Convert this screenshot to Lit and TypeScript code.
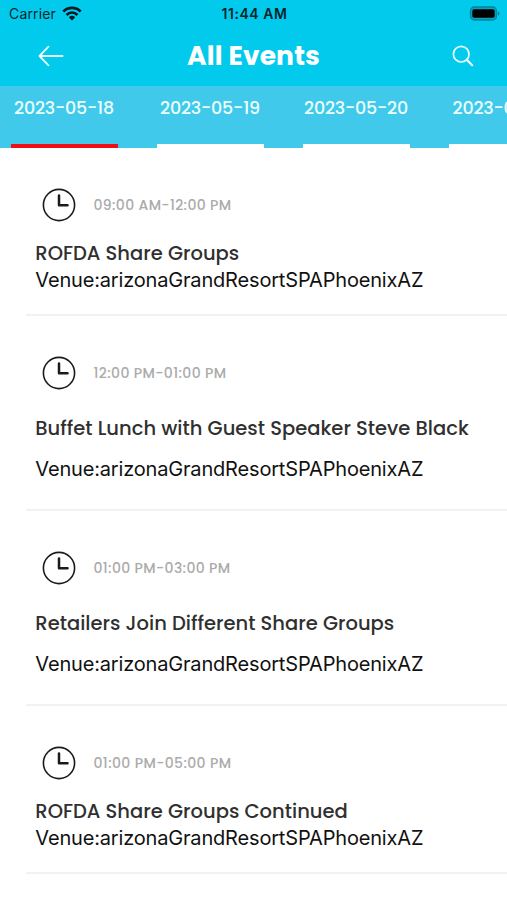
import { LitElement, html, css, svg } from "lit";
import { customElement, property } from "lit/decorators.js";
import { classMap } from "lit/directives/class-map.js";

interface EventItem {
  time: string;
  timeWidth: number;
  title: string;
  titleWidth: number;
  tall: boolean;
}

const VENUE = "Venue:arizonaGrandResortSPAPhoenixAZ";

const EVENTS: EventItem[] = [
  { time: "09:00 AM-12:00 PM", timeWidth: 138, title: "ROFDA Share Groups", titleWidth: 204, tall: false },
  { time: "12:00 PM-01:00 PM", timeWidth: 133, title: "Buffet Lunch with Guest Speaker Steve Black", titleWidth: 433.5, tall: true },
  { time: "01:00 PM-03:00 PM", timeWidth: 137, title: "Retailers Join Different Share Groups", titleWidth: 359, tall: true },
  { time: "01:00 PM-05:00 PM", timeWidth: 138, title: "ROFDA Share Groups Continued", titleWidth: 312.5, tall: false },
];

const DATES = [
  { label: "2023-05-18", width: 100 },
  { label: "2023-05-19", width: 100 },
  { label: "2023-05-20", width: 104 },
  { label: "2023-05-21", width: 99 },
];

/** One line of text whose letter spacing is tuned so that it spans a given width. */
@customElement("fit-text")
class FitText extends LitElement {
  @property() text = "";
  @property({ type: Number }) span = 0;

  static styles = css`
    :host { display: block; white-space: nowrap; }
    .line { display: inline-block; }
  `;

  render() {
    return html`<span class="line">${this.text}</span>`;
  }

  updated() {
    const line = this.renderRoot.querySelector<HTMLElement>(".line")!;
    line.style.letterSpacing = "0px";
    const natural = line.getBoundingClientRect().width;
    line.style.letterSpacing = `${(this.span - natural) / this.text.length}px`;
  }
}

@customElement("event-row")
class EventRow extends LitElement {
  @property({ attribute: false }) item!: EventItem;

  static styles = css`
    :host { display: block; }
    .row { box-sizing: border-box; height: 168px; margin-left: 26px; padding: 40px 0 0 9.3px; border-bottom: 2px solid #f2f2f2; }
    .tall { height: 195px; }
    .when { display: flex; align-items: center; gap: 17px; height: 34px; padding-left: 7.2px; }
    .clock { width: 34px; height: 34px; flex: none; }
    .time { font-size: 14px; font-weight: 500; line-height: 20px; color: #ababab; padding-top: 1px; }
    .title { font-size: 19.5px; font-weight: 500; line-height: 26px; color: #303030; margin-top: 19px; }
    .venue { font-family: Inter, "Liberation Sans", sans-serif; font-size: 20px; line-height: 26px; color: #111; }
    .tall .title { margin-top: 26px; }
    .tall .venue { margin-top: 14px; }
  `;

  render() {
    const { time, timeWidth, title, titleWidth, tall } = this.item;
    return html`
      <div class=${classMap({ row: true, tall })}>
        <div class="when">
          <svg class="clock" viewBox="0 0 34 34" fill="none" stroke="#1a1a1a">
            <circle cx="17" cy="17" r="15.6" stroke-width="1.6" />
            <path d="M17 7.5V17.3H25.5" stroke-width="2.5" stroke-linecap="round" stroke-linejoin="round" />
          </svg>
          <fit-text class="time" .text=${time} .span=${timeWidth}></fit-text>
        </div>
        <fit-text class="title" .text=${title} .span=${titleWidth}></fit-text>
        <fit-text class="venue" .text=${VENUE} .span=${388}></fit-text>
      </div>
    `;
  }
}

@customElement("app-root")
class AppRoot extends LitElement {
  static styles = css`
    :host { display: block; width: 507px; height: 900px; overflow: hidden; background: #fff; font-family: Poppins, Inter, "Liberation Sans", sans-serif; }
    .top { height: 86px; background: #02caec; }
    .status { display: grid; grid-template-columns: 1fr auto 1fr; align-items: center; height: 28px; padding: 0 7px 0 9px; font-family: Inter, sans-serif; font-size: 14px; line-height: 18px; color: #06262c; }
    .carrier { display: flex; align-items: center; gap: 6px; }
    .carrier fit-text { margin-top: -1px; }
    .clock { font-size: 14px; font-weight: 600; }
    .wifi { width: 20px; height: 15px; margin-top: -2px; }
    .battery { width: 31px; height: 15px; justify-self: end; margin-top: -2px; }
    .nav { display: grid; grid-template-columns: 100px 1fr 100px; align-items: center; height: 56px; color: #fff; }
    .back { width: 26px; height: 22px; margin-left: 38px; }
    .heading { justify-self: center; margin: 0; font-size: 26.5px; font-weight: 700; line-height: 32px; }
    .search { width: 22px; height: 22px; margin-left: 44.5px; }
    .tabs { display: flex; gap: 39px; height: 61.5px; padding-left: 10.5px; background: #40c9eb; overflow: hidden; }
    .tab { box-sizing: border-box; flex: none; display: flex; justify-content: center; width: 107px; padding-top: 10px; border-bottom: 4px solid #fff; color: #eaffff; font-size: 17.5px; font-weight: 500; line-height: 24px; }
    .active { border-bottom-color: #ef0d16; }
  `;

  render() {
    return html`
      <header class="top">
        <div class="status">
          <div class="carrier">
            <fit-text .text=${"Carrier"} .span=${47}></fit-text>
            <svg class="wifi" viewBox="0 0 20 15">
              ${svg`<g fill="none" stroke="#001b20" stroke-width="2.7">
                <path d="M1.3 5.6C6.2 .7 13.8 .7 18.7 5.6" />
                <path d="M4.5 9C7.8 5.9 12.2 5.9 15.5 9" />
              </g>
              <path d="M6.8 11.2Q10 8.4 13.2 11.2L10 14.5Z" fill="#001b20" />`}
            </svg>
          </div>
          <fit-text class="clock" .text=${"11:44 AM"} .span=${66}></fit-text>
          <svg class="battery" viewBox="0 0 31 15">
            <rect x="1.5" y="1" width="26" height="13" rx="3.8" fill="#02a5c2" stroke="#058299" stroke-width="1.3" />
            <rect x="3.3" y="3.2" width="22.4" height="8.6" rx="1.8" fill="#000" />
            <path d="M29 5.2Q32 7.5 29 9.8Z" fill="#047b91" />
          </svg>
        </div>
        <div class="nav">
          <svg class="back" viewBox="0 0 26 22" fill="none" stroke="#e9fdff" stroke-width="1.8" stroke-linecap="round" stroke-linejoin="round">
            <path d="M24.5 11H1.5M10.5 1.7L1.5 11L10.5 20.3" />
          </svg>
          <h1 class="heading"><fit-text .text=${"All Events"} .span=${133}></fit-text></h1>
          <svg class="search" viewBox="0 0 22 22" fill="none" stroke="#e9fdff" stroke-linecap="round">
            <circle cx="9.2" cy="9.2" r="7.8" stroke-width="1.7" />
            <path d="M14.9 14.9L20.2 20.2" stroke-width="2.2" />
          </svg>
        </div>
      </header>
      <nav class="tabs">
        ${DATES.map(
          (d, i) => html`<div class=${classMap({ tab: true, active: i === 0 })}>
            <fit-text .text=${d.label} .span=${d.width}></fit-text>
          </div>`,
        )}
      </nav>
      <main>${EVENTS.map((e) => html`<event-row .item=${e}></event-row>`)}</main>
    `;
  }
}
